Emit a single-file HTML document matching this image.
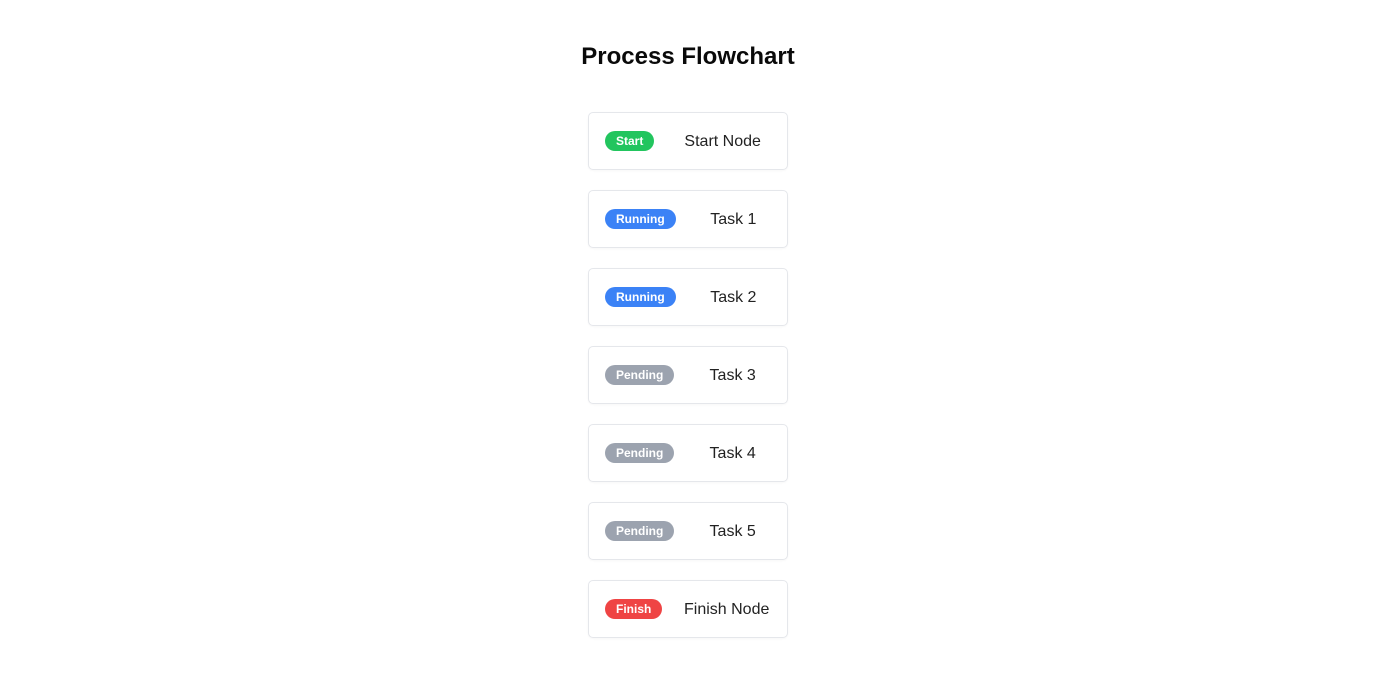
<!DOCTYPE html>
<html><head><meta charset="utf-8"><style>
*{box-sizing:border-box;margin:0;padding:0}
body{width:1376px;height:678px;background:#fff;font-family:"Liberation Sans",sans-serif;color:#111;position:relative}
h1{position:absolute;top:42px;left:0;width:1376px;text-align:center;font-size:24px;font-weight:700;line-height:30px;color:#0a0a0a}
.card{position:absolute;left:588px;width:200px;height:58px;border:1px solid #e5e7eb;border-radius:5px;display:flex;align-items:center;padding:0 16px;box-shadow:0 1px 2px rgba(0,0,0,0.03)}
.b{height:20px;line-height:20px;border-radius:10px;color:#fff;font-size:12px;font-weight:700;padding:0 11px;flex:none}
.t{flex:1;text-align:center;margin-left:20px;font-size:16px;color:#222;padding-top:2px}
.g{background:#22c55e}.bl{background:#3b82f6}.gr{background:#9ca3af}.r{background:#ef4444}
</style></head><body>
<h1>Process Flowchart</h1>
<div class="card" style="top:112px"><span class="b g">Start</span><span class="t">Start Node</span></div>
<div class="card" style="top:190px"><span class="b bl">Running</span><span class="t">Task 1</span></div>
<div class="card" style="top:268px"><span class="b bl">Running</span><span class="t">Task 2</span></div>
<div class="card" style="top:346px"><span class="b gr">Pending</span><span class="t">Task 3</span></div>
<div class="card" style="top:424px"><span class="b gr">Pending</span><span class="t">Task 4</span></div>
<div class="card" style="top:502px"><span class="b gr">Pending</span><span class="t">Task 5</span></div>
<div class="card" style="top:580px"><span class="b r">Finish</span><span class="t">Finish Node</span></div>
</body></html>
